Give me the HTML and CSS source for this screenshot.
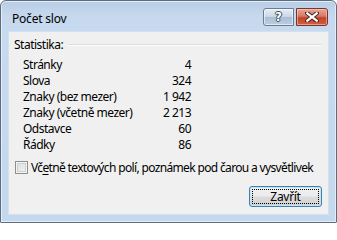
FILE: index.html
```html
<!DOCTYPE html>
<html lang="cs">
<head>
<meta charset="utf-8">
<title>Počet slov</title>
<link rel="stylesheet" href="styles.css">
</head>
<body>
<div class="window">
  <div class="titlebar">
    <span class="title">Počet slov</span>
    <div class="caption-buttons">
      <div class="cap help"><span class="q">?</span></div>
      <div class="cap close">
        <svg width="14" height="10" viewBox="0 0 14 10">
          <path d="M2 1 L12 9 M12 1 L2 9" stroke="#4a2a24" stroke-width="4.2" stroke-linecap="square"/>
          <path d="M2.3 1.3 L11.7 8.7 M11.7 1.3 L2.3 8.7" stroke="#fff" stroke-width="2.2" stroke-linecap="square"/>
        </svg>
      </div>
    </div>
  </div>
  <div class="client">
    <div class="group-head">
      <span class="group-label">Statistika:</span>
      <span class="group-line"></span>
    </div>
    <div class="stats">
      <div class="row"><span class="name">Stránky</span><span class="val">4</span></div>
      <div class="row"><span class="name">Slova</span><span class="val">324</span></div>
      <div class="row"><span class="name">Znaky (bez mezer)</span><span class="val">1 942</span></div>
      <div class="row"><span class="name">Znaky (včetně mezer)</span><span class="val">2 213</span></div>
      <div class="row"><span class="name">Odstavce</span><span class="val">60</span></div>
      <div class="row"><span class="name">Řádky</span><span class="val">86</span></div>
    </div>
    <label class="check">
      <span class="box"></span>
      <span class="check-text">Vč<u>e</u>tně textových polí, poznámek pod čarou a vysvětlivek</span>
    </label>
    <div class="actions">
      <button class="btn"><span class="focus">Zavřít</span></button>
    </div>
  </div>
</div>
</body>
</html>
```

FILE: styles.css
```css
html, body {
  margin: 0;
  padding: 0;
}
body {
  width: 337px;
  height: 223px;
  overflow: hidden;
  font-family: "Noto Sans", "DejaVu Sans", sans-serif;
  font-size: 12px;
  letter-spacing: -0.5px;
  color: #000;
  background: #fff;
}
.window {
  box-sizing: border-box;
  width: 337px;
  height: 223px;
  border: 1px solid #5d6d80;
  border-radius: 6px 6px 1px 1px;
  background: linear-gradient(180deg, #b9cde4 0px, #c5d8ee 14px, #c7daef 30px, #c4d8ee 100%);
  box-shadow: inset 0 0 0 1px #e3eefa;
  padding: 0 7px 7px;
  display: flex;
  flex-direction: column;
}
.titlebar {
  height: 29px;
  display: flex;
  align-items: flex-start;
  justify-content: space-between;
}
.title {
  padding-left: 4px;
  margin-top: 10px;
  line-height: 16px;
  font-size: 12px;
  letter-spacing: -0.2px;
}
.caption-buttons {
  display: flex;
  gap: 2px;
  margin-top: 7px;
  margin-right: 1px;
}
.cap {
  box-sizing: border-box;
  height: 18px;
  display: flex;
  align-items: center;
  justify-content: center;
  border: 1px solid #6a7c91;
}
.help {
  width: 31px;
  border-radius: 3px 0 0 3px;
  background: linear-gradient(180deg, #e6eef7 0%, #c9d7e7 48%, #a9bed6 52%, #bccde0 100%);
  box-shadow: inset 0 0 0 1px rgba(255,255,255,0.55);
}
.q {
  font-family: "DejaVu Sans", sans-serif;
  font-weight: bold;
  font-size: 12px;
  line-height: 12px;
  letter-spacing: 0;
  color: #fff;
  text-shadow: 1px 0 0 #3d4a5a, -1px 0 0 #3d4a5a, 0 1px 0 #3d4a5a, 0 -1px 0 #3d4a5a;
}
.close {
  width: 32px;
  border-color: #7a3428;
  border-radius: 0 3px 3px 0;
  background: linear-gradient(180deg, #e8a595 0%, #d77a66 45%, #c2432a 55%, #d0603f 100%);
  box-shadow: inset 0 0 0 1px rgba(255,220,210,0.5);
}
.client {
  flex: 1;
  background: #f0f0f0;
  border: 1px solid #d3e0ee;
  margin: 1px 0 0;
  display: flex;
  flex-direction: column;
  padding: 5px 0 0;
  box-sizing: border-box;
}
.group-head {
  display: flex;
  align-items: center;
  height: 16px;
  padding-left: 5px;
  padding-right: 6px;
}
.group-label {
  line-height: 16px;
}
.group-line {
  flex: 1;
  height: 1px;
  margin-left: 5px;
  margin-top: -1px;
  background: #d5dfe5;
  border-bottom: 1px solid #fff;
}
.stats {
  margin-top: 4px;
  padding-left: 14px;
}
.row {
  display: flex;
  height: 16px;
  line-height: 16px;
}
.name {
  width: 120px;
}
.val {
  width: 48px;
  text-align: right;
}
.check {
  display: flex;
  align-items: center;
  height: 16px;
  margin-top: 6px;
  padding-left: 6px;
  white-space: nowrap;
}
.box {
  box-sizing: border-box;
  flex: none;
  width: 13px;
  height: 13px;
  border: 1px solid #8e8f8f;
  background: linear-gradient(135deg, #dcdcdc 0%, #f4f4f4 100%);
  box-shadow: inset 0 0 0 1px #f4f4f4, inset 0 0 0 2px #d0d0d0;
  margin-right: 3px;
}
.check-text {
  letter-spacing: -0.65px;
}
.check-text u {
  text-decoration-thickness: 1px;
  text-underline-offset: 2px;
}
.actions {
  display: flex;
  justify-content: flex-end;
  margin-top: 11px;
  padding-right: 6px;
}
.btn {
  box-sizing: border-box;
  width: 73px;
  height: 21px;
  padding: 2px;
  border: 1px solid #3c7fb1;
  border-radius: 3px;
  background: linear-gradient(180deg, #f2f2f2 0%, #ebebeb 48%, #dddddd 52%, #cfcfcf 100%);
  box-shadow: inset 0 0 0 1px #c6e3f4;
  font-family: inherit;
  font-size: 12px;
  letter-spacing: -0.3px;
  color: #000;
  display: flex;
}
.focus {
  flex: 1;
  border: 1px dotted #000;
  line-height: 14px;
  text-align: center;
}
```
